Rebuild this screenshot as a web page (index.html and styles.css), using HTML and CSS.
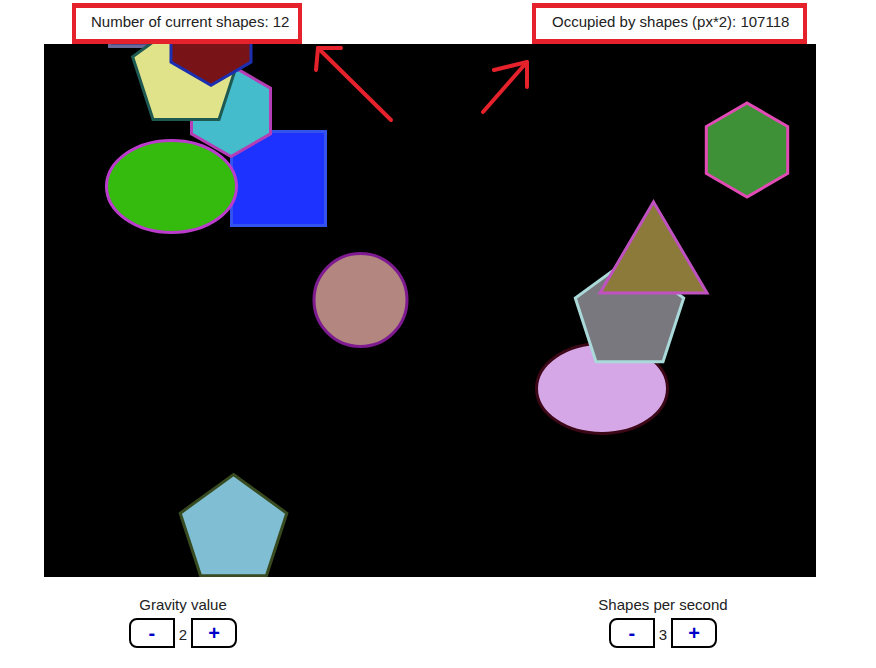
FILE: index.html
```html
<!DOCTYPE html>
<html>
<head>
<meta charset="utf-8">
<title>Shapes</title>
<link rel="stylesheet" href="styles.css">
</head>
<body>
<div class="page">
  <div class="topbar">
    <div class="stat stat-count">Number of current shapes: 12</div>
    <div class="stat stat-area">Occupied by shapes (px*2): 107118</div>
  </div>

  <div class="canvas">
    <svg class="scene" width="772" height="533" viewBox="44 44 772 533" xmlns="http://www.w3.org/2000/svg">
      <rect x="109.5" y="-30" width="67" height="76.5" fill="#4a4a8a" stroke="#6a6a98" stroke-width="3"/>
      <rect x="231.5" y="131.5" width="94" height="94" fill="#1e32ff" stroke="#3352ee" stroke-width="3"/>
      <polygon points="231,65.4 270.5,88.2 270.5,133.8 231,156.6 191.5,133.8 191.5,88.2" fill="#44bccb" stroke="#b53db5" stroke-width="3"/>
      <ellipse cx="171.5" cy="186.5" rx="65" ry="46" fill="#34bb0e" stroke="#bb3ccc" stroke-width="3"/>
      <polygon points="186,18 239.4,56.8 219,119.5 153,119.5 132.6,56.8" fill="#e0e38a" stroke="#1e5a52" stroke-width="3"/>
      <polygon points="211,-7.2 251,15.9 251,62.1 211,85.2 171,62.1 171,15.9" fill="#781418" stroke="#1c2fb0" stroke-width="3"/>
      <circle cx="360.5" cy="300" r="46.5" fill="#b38680" stroke="#7e1b90" stroke-width="3"/>
      <polygon points="747,103 787.7,126.5 787.7,173.5 747,197 706.3,173.5 706.3,126.5" fill="#3e9137" stroke="#e24bb6" stroke-width="3"/>
      <ellipse cx="602" cy="388.5" rx="65.5" ry="45" fill="#d5a7e7" stroke="#3c0716" stroke-width="3"/>
      <polygon points="629.5,258.6 683.7,298 663,361.7 596,361.7 575.3,298" fill="#7a787f" stroke="#a9d9d9" stroke-width="3"/>
      <polygon points="653.5,202 707,293 600,293" fill="#8c7a3a" stroke="#bf52c0" stroke-width="3"/>
      <polygon points="233.5,474.5 286.8,513.2 266.4,575.8 200.6,575.8 180.2,513.2" fill="#7fbed3" stroke="#384a1f" stroke-width="3"/>
    </svg>
  </div>

  <div class="controls">
    <div class="control">
      <div class="control-label">Gravity value</div>
      <div class="stepper">
        <button class="btn btn-minus">-</button>
        <span class="value">2</span>
        <button class="btn btn-plus">+</button>
      </div>
    </div>
    <div class="control">
      <div class="control-label">Shapes per second</div>
      <div class="stepper">
        <button class="btn btn-minus">-</button>
        <span class="value">3</span>
        <button class="btn btn-plus">+</button>
      </div>
    </div>
  </div>

  <svg class="annotations" width="876" height="668" viewBox="0 0 876 668" xmlns="http://www.w3.org/2000/svg">
    <g stroke="#e5222b" stroke-width="4" stroke-linecap="round" stroke-linejoin="round" fill="none">
      <path d="M391 120 L318 48"/>
      <path d="M341 48 L318 48 L316 70"/>
      <path d="M483 112 L527 62"/>
      <path d="M494 70 L527 62 L527 87"/>
    </g>
  </svg>
</div>
</body>
</html>
```

FILE: styles.css
```css
html, body {
  margin: 0;
  padding: 0;
  background: #ffffff;
}

body {
  font-family: "Liberation Sans", Arial, sans-serif;
  font-size: 15px;
  color: #222222;
}

.page {
  position: relative;
  width: 876px;
  height: 668px;
  overflow: hidden;
}

.topbar {
  display: flex;
  align-items: flex-start;
  gap: 230px;
  height: 44px;
  box-sizing: border-box;
  padding: 3px 0 0 72px;
}

.stat {
  border: 5px solid #e5222b;
  border-left-width: 4px;
  border-right-width: 4px;
  line-height: 17px;
  padding: 5px 0 9px 0;
  white-space: nowrap;
  box-sizing: border-box;
  height: 41px;
}

.stat-count {
  width: 230px;
  padding-left: 15px;
}

.stat-area {
  width: 275px;
  padding-left: 16px;
}

.canvas {
  margin-left: 44px;
  width: 772px;
  height: 533px;
  background: #000000;
  overflow: hidden;
}

.scene {
  display: block;
}

.controls {
  display: flex;
  gap: 280px;
  padding: 19px 0 0 83px;
}

.control {
  width: 200px;
  display: flex;
  flex-direction: column;
  align-items: center;
}

.control-label {
  line-height: 17px;
  height: 17px;
}

.stepper {
  display: flex;
  align-items: center;
  margin-top: 5px;
}

.value {
  margin: 0 4px;
  line-height: 17px;
  padding-top: 2px;
}

.btn {
  width: 46px;
  height: 30px;
  box-sizing: border-box;
  border: 2px solid #000000;
  background: #ffffff;
  color: #0000c8;
  font-family: "Liberation Sans", Arial, sans-serif;
  font-weight: bold;
  font-size: 20px;
  line-height: 24px;
  padding: 0;
  margin: 0;
}

.btn-minus {
  border-radius: 8px 0 0 8px;
}

.btn-plus {
  border-radius: 0 8px 8px 0;
}

.annotations {
  position: absolute;
  left: 0;
  top: 0;
  pointer-events: none;
}
```
